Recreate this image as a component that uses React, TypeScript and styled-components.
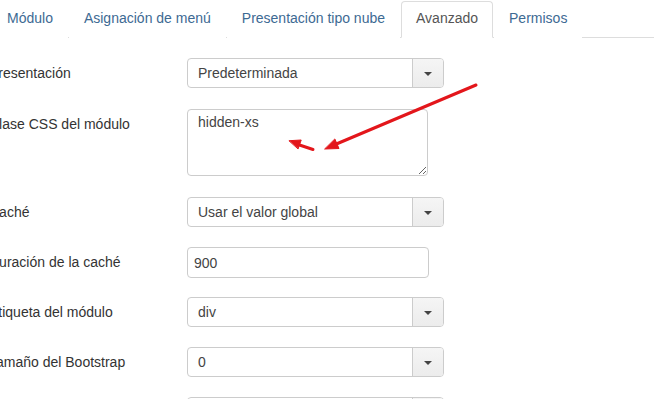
import React from "react";
import styled, { createGlobalStyle } from "styled-components";

const Global = createGlobalStyle`
  html, body { margin: 0; padding: 0; background: #fff; overflow: hidden; }
  body { font-family: "Liberation Sans", Arial, sans-serif; font-size: 14px; color: #333; }
`;

const Page = styled.div`
  position: relative;
  width: 654px;
  height: 399px;
  overflow: hidden;
`;

const Tabs = styled.ul`
  list-style: none;
  margin: 0 0 0 -8px;
  padding: 1px 0 0 0;
  display: flex;
  border-bottom: 1px solid #ddd;
  width: 680px;
`;

const Tab = styled.li<{ $active?: boolean }>`
  margin-right: 1px;
  margin-bottom: -1px;
  padding: 6px 14px 9px;
  line-height: 20px;
  border: 1px solid ${(p) => (p.$active ? "#ddd" : "transparent")};
  border-bottom-color: ${(p) => (p.$active ? "#fff" : "transparent")};
  border-radius: 4px 4px 0 0;
  background: #fff;
  color: ${(p) => (p.$active ? "#555" : "#3d6a93")};
  white-space: nowrap;
`;

const Form = styled.div`
  padding-top: 20px;
  margin-left: -11px;
`;

const Row = styled.div<{ $gap?: number }>`
  display: grid;
  grid-template-columns: 198px auto;
  align-items: start;
  margin-bottom: ${(p) => p.$gap ?? 20}px;
`;

const Label = styled.label`
  line-height: 30px;
  color: #333;
  white-space: nowrap;
`;

const Select = styled.div<{ $w: number }>`
  box-sizing: border-box;
  width: ${(p) => p.$w}px;
  height: 30px;
  display: flex;
  border: 1px solid #ccc;
  border-radius: 4px;
  background: #fff;
  overflow: hidden;
`;

const SelectValue = styled.div`
  flex: 1;
  padding: 0 10px;
  line-height: 28px;
  color: #444;
`;

const SelectButton = styled.div`
  width: 30px;
  border-left: 1px solid #ccc;
  background: linear-gradient(#f5f5f5, #ececec);
  display: flex;
  align-items: center;
  justify-content: center;
`;

const Caret = styled.span`
  width: 0;
  height: 0;
  border-top: 4px solid #444;
  border-left: 4px solid transparent;
  border-right: 4px solid transparent;
  margin-top: 1px;
`;

const TextArea = styled.textarea`
  box-sizing: border-box;
  width: 241px;
  height: 67px;
  padding: 4px 10px;
  line-height: 16px;
  border: 1px solid #ccc;
  border-radius: 4px;
  font-family: "Liberation Sans", Arial, sans-serif;
  font-size: 14px;
  color: #444;
  margin: 0;
  outline: none;
`;

const Input = styled.input`
  box-sizing: border-box;
  width: 242px;
  height: 31px;
  padding: 0 6px;
  border: 1px solid #ccc;
  border-radius: 4px;
  font-family: "Liberation Sans", Arial, sans-serif;
  font-size: 14px;
  color: #444;
  margin: 0;
  outline: none;
`;

const Overlay = styled.svg`
  position: absolute;
  left: 0;
  top: 0;
  pointer-events: none;
`;

const SelectBox = ({ value }: { value: string }) => (
  <Select $w={257}>
    <SelectValue>{value}</SelectValue>
    <SelectButton>
      <Caret />
    </SelectButton>
  </Select>
);

export default function App() {
  return (
    <Page>
      <Global />
      <Tabs>
        <Tab>Módulo</Tab>
        <Tab>Asignación de menú</Tab>
        <Tab>Presentación tipo nube</Tab>
        <Tab $active>Avanzado</Tab>
        <Tab>Permisos</Tab>
      </Tabs>
      <Form>
        <Row $gap={21}>
          <Label>Presentación</Label>
          <SelectBox value="Predeterminada" />
        </Row>
        <Row $gap={21}>
          <Label>Clase CSS del módulo</Label>
          <TextArea readOnly value="hidden-xs" />
        </Row>
        <Row>
          <Label>Caché</Label>
          <SelectBox value="Usar el valor global" />
        </Row>
        <Row $gap={19}>
          <Label>Duración de la caché</Label>
          <Input readOnly value="900" />
        </Row>
        <Row>
          <Label>Etiqueta del módulo</Label>
          <SelectBox value="div" />
        </Row>
        <Row>
          <Label>Tamaño del Bootstrap</Label>
          <SelectBox value="0" />
        </Row>
        <Row>
          <Label>Estilo del encabezado</Label>
          <SelectBox value="h3" />
        </Row>
      </Form>
      <Overlay width="654" height="399" viewBox="0 0 654 399">
        <g stroke="#e3161b" strokeWidth="3" strokeLinecap="round" fill="#e3161b">
          <line x1="476" y1="85" x2="334" y2="145" />
          <polygon points="325,149 339,148.5 335,139.3" strokeWidth="1" />
          <line x1="313" y1="149.5" x2="298" y2="144.5" />
          <polygon points="289.3,140.7 301.2,140 298.2,148.6" strokeWidth="1" />
        </g>
      </Overlay>
    </Page>
  );
}
